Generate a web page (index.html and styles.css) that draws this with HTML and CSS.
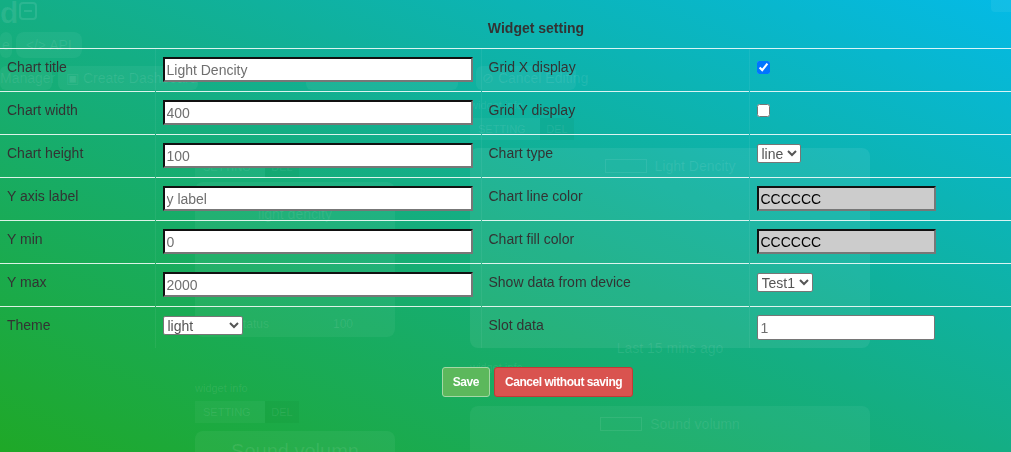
FILE: index.html
```html
<!DOCTYPE html>
<html lang="en">
<head>
    <meta charset="UTF-8">
    <meta name="viewport" content="width=device-width, initial-scale=1.0">
    <title>Widget setting</title>
    <link rel="stylesheet" href="styles.css">
</head>
<body>

<!-- dashboard behind the modal -->
<div class="page">
    <div class="top">
        <span class="brand">d</span>
        <span class="brand-icon"><span class="minus"></span></span>
        <span class="gear"></span>
    </div>
    <div class="pills">
        <span class="pill">e</span>
        <span class="pill">&lt;/&gt; API</span>
    </div>
    <div class="tools">
        <span class="tool t1">Manager</span>
        <span class="tool t2">&#9635; Create Dashboard</span>
        <span class="tool t3"></span>
        <span class="tool t4">&#8856; Cancel Editing</span>
    </div>
    <div class="board">
        <div class="col col-a">
            <div class="actions"><span class="set">SETTING</span><span class="del">DEL</span></div>
            <div class="card card-a">
                <p class="card-name">light dencity</p>
                <p class="card-foot"><span>status</span><span>100</span></p>
            </div>
            <p class="info">widget info</p>
            <div class="actions"><span class="set">SETTING</span><span class="del">DEL</span></div>
            <div class="card card-c">
                <p class="card-big">Sound volumn</p>
            </div>
        </div>
        <div class="col col-b">
            <p class="info">widget info</p>
            <div class="actions"><span class="set">SETTING</span><span class="del">DEL</span></div>
            <div class="card card-b">
                <p class="legend"><span class="box"></span>Light Dencity</p>
                <p class="ago">Last 15 mins ago</p>
            </div>
            <p class="info">widget info</p>
            <div class="card card-d">
                <p class="legend"><span class="box"></span>Sound volumn</p>
            </div>
        </div>
    </div>
</div>

<!-- setting modal -->
<div class="modal">
    <div class="dialog">
        <h4 class="modal-title">Widget setting</h4>
        <table class="setting">
            <colgroup>
                <col class="c1"><col class="c2"><col class="c3"><col>
            </colgroup>
            <tr>
                <td>Chart title</td>
                <td><input class="field" type="text" placeholder="Light Dencity"></td>
                <td>Grid X display</td>
                <td><input class="check" type="checkbox" checked></td>
            </tr>
            <tr>
                <td>Chart width</td>
                <td><input class="field" type="text" placeholder="400"></td>
                <td>Grid Y display</td>
                <td><input class="check" type="checkbox"></td>
            </tr>
            <tr>
                <td>Chart height</td>
                <td><input class="field" type="text" placeholder="100"></td>
                <td>Chart type</td>
                <td><select class="pick"><option>line</option><option>bar</option></select></td>
            </tr>
            <tr>
                <td>Y axis label</td>
                <td><input class="field" type="text" placeholder="y label"></td>
                <td>Chart line color</td>
                <td><input class="field color" type="text" value="CCCCCC"></td>
            </tr>
            <tr>
                <td>Y min</td>
                <td><input class="field" type="text" placeholder="0"></td>
                <td>Chart fill color</td>
                <td><input class="field color" type="text" value="CCCCCC"></td>
            </tr>
            <tr>
                <td>Y max</td>
                <td><input class="field" type="text" placeholder="2000"></td>
                <td>Show data from device</td>
                <td><select class="pick"><option>Test1</option><option>Test2</option></select></td>
            </tr>
            <tr>
                <td>Theme</td>
                <td><select class="pick theme"><option>light</option><option>dark</option></select></td>
                <td>Slot data</td>
                <td><input class="slot" type="text" placeholder="1"></td>
            </tr>
        </table>
        <div class="footer">
            <button class="btn save">Save</button>
            <button class="btn cancel">Cancel without saving</button>
        </div>
    </div>
</div>

</body>
</html>
```

FILE: styles.css
```css
html, body{
    margin: 0;
    padding: 0;
    height: 452px;
    overflow: hidden;
}

body{
    background: linear-gradient(to top right, #1fa827 0%, #14ae84 50%, #04bae6 100%);
    font-family: "Liberation Sans", Arial, sans-serif;
    font-size: 14px;
    line-height: 20px;
    color: #333;
}

/* ---------- faded dashboard ---------- */

.page{
    color: rgba(255, 255, 255, 0.09);
    white-space: nowrap;
}

.top{
    display: flex;
    align-items: flex-start;
    height: 32px;
}
.brand{
    font-size: 30px;
    line-height: 26px;
    font-weight: bold;
}
.brand-icon{
    position: relative;
    width: 14px;
    height: 14px;
    margin: 2px 0 0 1px;
    border: 2px solid rgba(255, 255, 255, 0.1);
    border-radius: 4px;
}
.minus{
    position: absolute;
    left: 3px;
    right: 3px;
    top: 6px;
    height: 2px;
    background: rgba(255, 255, 255, 0.1);
}
.gear{
    margin-left: auto;
    width: 20px;
    height: 12px;
    border-radius: 0 0 0 4px;
    background: rgba(255, 255, 255, 0.06);
}

.pills{
    display: flex;
    gap: 4px;
    height: 34px;
}
.pill{
    padding: 3px 10px;
    height: 20px;
    border-radius: 8px;
    background: rgba(255, 255, 255, 0.05);
}
.pill:first-child{
    padding: 3px 2px;
}

.tools{
    display: flex;
    gap: 6px;
    height: 30px;
}
.tool{
    height: 24px;
    padding: 2px 0 0;
    border-radius: 6px;
    background: rgba(255, 255, 255, 0.05);
    box-sizing: border-box;
}
.t1{ width: 52px; }
.t2{ width: 140px; padding-left: 8px; }
.t3{ width: 152px; margin-left: 102px; }
.t4{ width: 100px; margin-left: 12px; padding-left: 6px; }

.board{
    display: flex;
    align-items: flex-start;
    padding-left: 195px;
    gap: 75px;
}
.col{
    display: flex;
    flex-direction: column;
}
.col-a{
    width: 200px;
    margin-top: 60px;
}
.col-b{
    width: 400px;
}

.actions{
    display: flex;
    height: 22px;
    font-size: 11px;
    line-height: 22px;
}
.set{
    width: 62px;
    padding-left: 8px;
    background: rgba(255, 255, 255, 0.04);
}
.del{
    width: 34px;
    text-align: center;
    background: rgba(0, 80, 0, 0.05);
}

.card{
    border-radius: 8px;
    background: rgba(255, 255, 255, 0.05);
    box-sizing: border-box;
}
.card p{
    margin: 0;
}
.card-a{
    margin-top: 4px;
    height: 155px;
    padding: 22px 10px 0;
}
.card-name{
    text-align: center;
    height: 110px;
}
.card-foot{
    display: flex;
    justify-content: space-around;
    font-size: 12px;
}
.card-b{
    margin-top: 8px;
    height: 200px;
    padding: 8px 0 0;
    background: rgba(255, 255, 255, 0.07);
}
.card-c{
    margin-top: 8px;
    height: 40px;
    padding: 10px 0 0;
}
.card-big{
    text-align: center;
    font-size: 20px;
}
.card-d{
    margin-top: 26px;
    height: 60px;
    padding: 8px 0 0;
}
.legend{
    display: flex;
    justify-content: center;
    align-items: center;
    gap: 8px;
}
.box{
    width: 40px;
    height: 12px;
    border: 1px solid rgba(255, 255, 255, 0.08);
}
.ago{
    text-align: center;
    margin-top: 162px !important;
}
.info{
    margin: 44px 0 6px;
    font-size: 11px;
    line-height: 14px;
}
.col-b .info{
    margin-top: 12px;
}
.col-b .info:first-child{
    margin: 2px 0 6px;
}

/* ---------- modal ---------- */

.modal{
    position: fixed;
    top: 0;
    left: 0;
    right: 0;
    bottom: 0;
}

.dialog{
    width: 1072px;
}

.modal-title{
    margin: 0;
    padding: 18px 0 10px;
    text-align: center;
    font-size: 14px;
    line-height: 20px;
    font-weight: bold;
}

.setting{
    width: 100%;
    border-collapse: collapse;
    table-layout: fixed;
}
.c1{ width: 155px; }
.c2{ width: 326px; }
.c3{ width: 268px; }

.setting td{
    padding: 8px 8px 8px 7px;
    vertical-align: top;
    border-top: 1px solid rgba(255, 255, 255, 0.85);
    border-left: 1px solid rgba(255, 255, 255, 0.06);
}
.setting td:first-child{
    border-left: none;
}

.field{
    display: block;
    box-sizing: border-box;
    width: 310px;
    height: 25px;
    margin: 0 0 1px;
    padding: 1px 2px;
    border-width: 2px;
    border-style: solid;
    border-color: #111 #777 #777 #111;
    background: #fff;
    font-family: "Liberation Sans", Arial, sans-serif;
    font-size: 14px;
    color: #000;
}
.field::placeholder{
    color: #6f6f6f;
}
.color{
    width: 179px;
    background: #ccc;
}

.check{
    display: block;
    margin: 4px 0 0;
    width: 13px;
    height: 13px;
}

.pick{
    margin-top: 1px;
    height: 19px;
    font-family: "Liberation Sans", Arial, sans-serif;
    font-size: 14px;
    color: #555;
    background: #fff;
    border: 1px solid #767676;
    border-radius: 2px;
}
.theme{
    width: 80px;
}

.slot{
    display: block;
    box-sizing: border-box;
    width: 178px;
    height: 25px;
    margin: 0;
    padding: 1px 3px;
    border: 1px solid #767676;
    border-radius: 2px;
    font-family: "Liberation Sans", Arial, sans-serif;
    font-size: 14px;
}
.slot::placeholder{
    color: #6f6f6f;
}

.footer{
    text-align: center;
    padding: 19px 0 0 3px;
}

.btn{
    height: 30px;
    padding: 5px 10px;
    font-family: "Liberation Sans", Arial, sans-serif;
    font-size: 12px;
    line-height: 18px;
    font-weight: bold;
    letter-spacing: -0.45px;
    color: #fff;
    border-radius: 3px;
    cursor: pointer;
}
.save{
    background: #5cb85c;
    border: 1px solid #a5d8a5;
}
.cancel{
    background: #d9534f;
    border: 1px solid #c23a36;
}
```
